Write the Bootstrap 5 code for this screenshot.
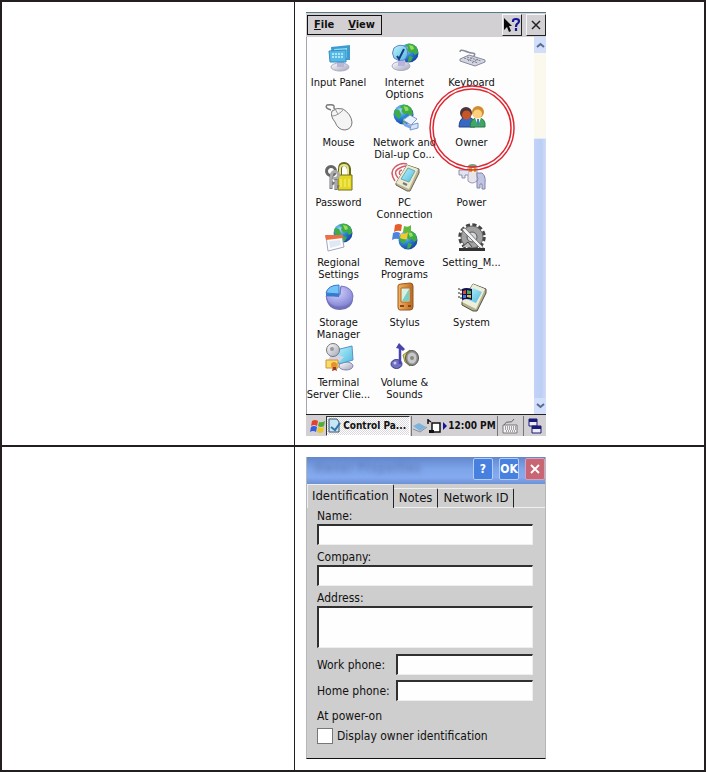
<!DOCTYPE html>
<html lang="en">
<head>
<meta charset="utf-8">
<meta name="viewport" content="width=device-width, initial-scale=1">
<title>Owner settings</title>
<link href="https://cdn.jsdelivr.net/npm/bootstrap@5.3.0/dist/css/bootstrap.min.css" rel="stylesheet">
<style>
body{font-family:"DejaVu Sans Condensed","DejaVu Sans","Liberation Sans",sans-serif;font-size:11px;line-height:12px;color:#111;background:#fff}
button{color:inherit;font:inherit}
.sheet{border:2px solid #231f20}
.step{display:grid;grid-template-columns:293fr 409fr}
.step + .step{border-top:2px solid #231f20}
.step-note{border-right:1px solid #231f20}
.step-shot{padding:10px 11px 9px}
.step + .step .step-shot{padding-bottom:11px}
.device{max-width:240px}
.chrome{background:#d3d0d4}
.chrome button{background:transparent;border:0;padding:0}
.chrome .menus{border:1px solid #111;padding:0 6px;gap:14px;height:20px;margin:1px;font-weight:bold}
.chrome .tool{width:20px;height:22px;border:1px solid #f6f6f6;border-right-color:#222;border-bottom-color:#222}
.menubar{height:25px;border-top:1px solid #59788a}
.applets{display:grid;grid-template-columns:65px 67px 67px;grid-auto-rows:60px;padding:6px 0 11px;box-shadow:inset 1px 0 #a5a5b0;background:#fdfdfe}
.applet{border:0;background:none;padding:0;white-space:nowrap}
.applet svg{width:28px;height:28px;margin-bottom:6px;overflow:visible}
.applet .ring{left:-9px;top:-18px;width:86px;height:86px;margin:0}
.scroller{width:12px;background:#fbf9ee}
.scroller button{border:0;padding:0;height:16px;background:#d2dffa;color:#456}
.thumb{flex:0 0 260px;background:linear-gradient(90deg,#c3d3f8,#bbcef5 60%,#d0dcf6);border-top:1px solid #e2eafb}
.taskbar{height:22px;border-top:1px solid #222;font-weight:bold;font-size:10px;white-space:nowrap}
.chrome .running{height:20px;width:84px;padding:0 1px;gap:2px;border:1px solid #333;border-right-color:#fff;border-bottom-color:#fff;background:repeating-conic-gradient(#fff 0 25%,#dad8dc 0 50%) 0 0/2px 2px}
.tray{gap:1px}
.chrome .edge{border-left:1px solid #777;height:20px}
.dialog{background:#cecece;border-left:1px solid #b7b7b9;border-right:1px solid #b7b7b9;border-bottom:1px solid #111;font-size:12px;line-height:16px}
.titlebar{height:27px;background:linear-gradient(#6387cd,#7da5ea 45%,#85aaf0 75%,#6e91d4);gap:6px;padding:1px 0 4px 7px}
.titlebar h1{font-size:12px;line-height:20px;font-weight:bold;color:transparent;text-shadow:0 0 5px #596ba488}
.titlebar button{width:20px;height:22px;border:1px solid #b3cdf9;border-radius:2px;background:#4880e0;color:#fff;font-weight:bold;padding:0}
.titlebar .shut{background:#c86674;border-color:#d6a2c2}
.tabs{height:24px;font-size:13px}
.tabs button{height:20px;padding:0 5px;border:0;border-top:1px solid #efefef;border-right:1px solid #222;border-bottom:1px solid #efefef;border-radius:0 2px 0 0;background:#cecece}
.tabs .on{height:24px;padding:0 4px 2px;border-bottom:0;border-left:1px solid #efefef}
.tab-rest{border-bottom:1px solid #efefef}
.sheet-form{padding:0 12px 14px 10px}
.sheet-form label{display:block}
.field{width:100%;height:21px;border:1px solid #eee;border-top:2px solid #303030;border-left:2px solid #303030;border-radius:0;background:#fefefe;padding:0 4px;display:block;resize:none}
.field-gap{margin-bottom:4px}
.area{height:42px;margin-bottom:6px}
.phone{margin-bottom:5px}
.phone label{flex:0 0 79px;white-space:nowrap}
.sheet-form legend{float:none;font-size:12px;line-height:16px;padding:2px 0 4px;margin:0}
.tick{appearance:none;width:16px;height:16px;margin:0;border:1px solid #777;background:#fff}
.tick:checked{background:#456}
</style>
<script src="https://cdn.jsdelivr.net/npm/bootstrap@5.3.0/dist/js/bootstrap.bundle.min.js"></script>
</head>
<body>
<svg width="0" height="0" class="position-absolute" aria-hidden="true">
<defs>
<radialGradient id="sea" cx=".35" cy=".3" r=".8"><stop offset="0" stop-color="#9fd8f8"/><stop offset=".45" stop-color="#2f86d8"/><stop offset="1" stop-color="#123a9c"/></radialGradient>
<linearGradient id="steel" x1="0" y1="0" x2="1" y2="1"><stop offset="0" stop-color="#fff"/><stop offset="1" stop-color="#a4a5b8"/></linearGradient>
<linearGradient id="glass" x1="0" y1="0" x2="1" y2="1"><stop offset="0" stop-color="#bdf5fb"/><stop offset="1" stop-color="#4fb8e0"/></linearGradient>
<radialGradient id="pie" cx=".4" cy=".3" r=".8"><stop offset="0" stop-color="#d5d5ff"/><stop offset="1" stop-color="#7878cf"/></radialGradient>
<linearGradient id="bronze"><stop offset="0" stop-color="#f5b565"/><stop offset="1" stop-color="#b86a22"/></linearGradient>
<symbol id="globe" viewBox="0 0 20 20"><circle cx="10" cy="10" r="9.5" fill="url(#sea)"/><path d="M9 1c4-1 7 1 9 4l1 5-3 2-2-3-3 1-3-3 1-3-3-1zM2 5l4 1 2 4-2 4-3-2-2-4zM10 13l4 1-2 4-3 1z" fill="#3fae42"/><path d="M10 2l4 1 1 3-3 1z" fill="#9add63"/></symbol>
</defs></svg>
<main class="sheet">
<section class="step">
<div class="step-note"></div>
<div class="step-shot">
<div class="device">
<header class="menubar chrome d-flex align-items-center">
<nav class="menus d-flex align-items-center me-auto"><button type="button"><u>F</u>ile</button><button type="button"><u>V</u>iew</button></nav>
<button type="button" class="tool d-flex align-items-center justify-content-center me-1" aria-label="Help"><svg width="18" height="18" viewBox="0 0 18 18"><path d="M1 2v12l3-3 2 5 2-1-2-5h3z" fill="#080808"/><path d="M10 6V5q0-2 3-2t3 2q0 2-2 3-1 1-1 3M13 12v3" fill="none" stroke="#15159b" stroke-width="2.2"/></svg></button>
<button type="button" class="tool d-flex align-items-center justify-content-center" aria-label="Close"><svg width="10" height="10" viewBox="0 0 10 10"><path d="M1 1l8 8M9 1L1 9" stroke="#222" stroke-width="1.5"/></svg></button>
</header>
<div class="d-flex">
<div class="applets flex-grow-1">
<button type="button" class="applet d-flex flex-column align-items-center"><svg viewBox="0 0 28 28"><ellipse cx="15" cy="24" rx="9" ry="4" fill="url(#steel)" stroke="#a9a9c4"/><path d="M12 17h7v7h-7z" fill="#b9b5d6"/><path d="M6 4l19-2v15H7z" fill="#3e9bd1"/><path d="M9 6l13-1v10H9z" fill="#8edff4"/><path d="M4 8l17-1v12H5z" fill="#57b7e5" stroke="#368ec0"/><path d="M7 11h11M7 14h11" stroke="#a9e6f8" stroke-width="2" stroke-dasharray="2 1"/></svg><span>Input Panel</span></button>
<button type="button" class="applet d-flex flex-column align-items-center"><svg viewBox="0 0 28 28"><use href="#globe" x="8" y="0" width="20" height="20"/><ellipse cx="10" cy="23" rx="9" ry="4.500" fill="url(#steel)" stroke="#aaaad0"/><path d="M7 17h7v6H7z" fill="#b8b4df"/><path d="M3 5Q9 0 15 4q4 8-2 13-6 2-10-2-3-5 0-10z" fill="url(#glass)" stroke="#6783c7"/><path d="M6 13l2 3 5-10" fill="none" stroke="#173b83" stroke-width="2"/></svg><span>Internet<br>Options</span></button>
<button type="button" class="applet d-flex flex-column align-items-center"><svg viewBox="0 0 28 28"><path d="M2 9q0-3 5-1t7 2q5 0 1 4" fill="none" stroke="#888b99" stroke-width="1.5"/><path d="M2 16l9-4 16 5v2l-10 4L2 18z" fill="#d4d5df" stroke="#85899b"/><path d="M6 15l14 5M9 14l14 4M10 18l5-4M14 20l6-4" stroke="#777d95" stroke-dasharray="2 1"/></svg><span>Keyboard</span></button>

<button type="button" class="applet d-flex flex-column align-items-center"><svg viewBox="0 0 28 28"><path d="M15 7Q8 7 9 4T2 2q-3 3 4 5" fill="none" stroke="#777" stroke-width="1.4"/><path d="M7 8q5-4 11-2 8 5 9 13 0 7-7 8-7 0-10-8-5-6-3-11z" fill="#f4f4f5" stroke="#77777b"/><path d="M7 13q6 0 12-7M13 11l-3-5" fill="none" stroke="#999"/></svg><span>Mouse</span></button>
<button type="button" class="applet d-flex flex-column align-items-center"><svg viewBox="0 0 28 28"><use href="#globe" x="2" y="1" width="21" height="21"/><path d="M12 17l7-5 7 4-6 6z" fill="#e9f2ff" stroke="#7f9cd0"/><path d="M12 19l7 3 1 4-7-3z" fill="#80a7e7"/><path d="M20 22l7-2v5l-8 2z" fill="#d6e4fa" stroke="#7999c8"/></svg><span>Network and<br>Dial-up Co...</span></button>
<button type="button" class="applet d-flex flex-column align-items-center position-relative"><svg viewBox="0 0 28 28"><path d="M1 24q0-10 8-10t8 10z" fill="#3668c6" stroke="#244787"/><circle cx="8" cy="10" r="6" fill="#4b3538"/><circle cx="8.500" cy="12" r="4.500" fill="#c85528"/><path d="M12 24q0-9 8-9t7 9z" fill="#3fa761" stroke="#28784c"/><path d="M17 15l3 7 3-7z" fill="#fff"/><circle cx="20" cy="9" r="6" fill="#d08c2f"/><circle cx="19.500" cy="11" r="4.500" fill="#ffd17c"/><path d="M20 16v6" stroke="#477fc4" stroke-width="2"/></svg><span>Owner</span><svg class="ring position-absolute" viewBox="0 0 86 86"><circle cx="43" cy="43" r="42" fill="none" stroke="#df2731" stroke-width="1.500"/><circle cx="43" cy="43" r="39" fill="none" stroke="#df2731" stroke-width="1.500"/></svg></button>

<button type="button" class="applet d-flex flex-column align-items-center"><svg viewBox="0 0 28 28"><path d="M15 14V6q0-5 4-5t5 5v8" fill="none" stroke="#67671d" stroke-width="4"/><path d="M15 14V6q0-4 4-4t4 4v8" fill="none" stroke="#e7e28c" stroke-width="2"/><path d="M13 12h14v15H13z" fill="#e2d627" stroke="#75701b"/><path d="M16 16v8M20 16v8M24 16v8" stroke="#fff37a"/><circle cx="6" cy="8" r="4.500" fill="none" stroke="#666" stroke-width="3"/><circle cx="10" cy="12" r="3.500" fill="none" stroke="#aaa" stroke-width="3"/><path d="M6 13v13M6 19l3 2M11 16v11M11 23l3 1" stroke="#77777d" stroke-width="3"/><path d="M6 13v12M11 17v9" stroke="#ddd"/></svg><span>Password</span></button>
<button type="button" class="applet d-flex flex-column align-items-center"><svg viewBox="0 0 28 28"><path d="M4 18Q-2 9 4 4T16 1M7 15Q2 9 7 6t8-3M9 12q-2-4 2-5" fill="none" stroke="#d45b66" stroke-width="1.500"/><path d="M16 2l12 4v4L19 28h-3L5 22v-2z" fill="#bcb596" stroke="#68644e"/><path d="M16 2l11 4-9 20L5 20z" fill="#eee9cf"/><path d="M17 5l7 3-6 11-8-3z" fill="url(#glass)" stroke="#64aaa9"/><path d="M12 20l4 2" stroke="#777" stroke-width="2"/></svg><span>PC<br>Connection</span></button>
<button type="button" class="applet d-flex flex-column align-items-center"><svg viewBox="0 0 28 28"><path d="M10 3h9v15q-5 4-9 0z" fill="#e7e4ee" stroke="#999ab0"/><path d="M11 4h7v5h-7z" fill="#df9d35"/><path d="M14 3h2v7h-2z" fill="#fff1a0"/><ellipse cx="14.500" cy="3" rx="4" ry="2" fill="#7ba07b"/><path d="M10 7H1v5h3v3h3v-3h3" fill="#e3e3f0" stroke="#8d8eac"/><path d="M19 10h5q4 3 3 10v6h-3v-5h-2v4h-3v-7q2-2 0-5z" fill="#c2c5e2" stroke="#8285ab"/></svg><span>Power</span></button>

<button type="button" class="applet d-flex flex-column align-items-center"><svg viewBox="0 0 28 28"><use href="#globe" x="8" y="0" width="20" height="20"/><path d="M1 13h16l2 11-16 4z" fill="#fff" stroke="#a1a6bc"/><path d="M0 12h18v3L1 17z" fill="#ed7045"/><path d="M4 18l11-1 1 5-11 3z" fill="#e0e8f5"/></svg><span>Regional<br>Settings</span></button>
<button type="button" class="applet d-flex flex-column align-items-center"><svg viewBox="0 0 28 28"><use href="#globe" x="7" y="7" width="20" height="20"/><path d="M4 2q4-2 7 0l-1 6q-4-1-7 1z" fill="#e55f2c"/><path d="M13 3q4 2 7-1v7q-4 2-8 0z" fill="#64b83c"/><path d="M2 10q4-2 7 0l-1 6q-4-1-7 1z" fill="#4d82df"/><path d="M10 10q4 2 7-1l-1 7q-3 1-7-1z" fill="#f4c735"/></svg><span>Remove<br>Programs</span></button>
<button type="button" class="applet d-flex flex-column align-items-center"><svg viewBox="0 0 28 28"><circle cx="14" cy="14" r="12" fill="none" stroke="#444" stroke-width="3.500" stroke-dasharray="4 2.280"/><circle cx="14" cy="14" r="11" fill="#a2a2a2" stroke="#666"/><circle cx="14" cy="14" r="5" fill="#d5dae0" stroke="#555"/><path d="M4 6l3-1 17 18 2 3-4-1L6 9z" fill="#f4f4f4" stroke="#777"/><path d="M1 25h26v3H1z" fill="#333"/><path d="M4 24l6-5 4 5" fill="#bbb" stroke="#444"/></svg><span>Setting_M...</span></button>

<button type="button" class="applet d-flex flex-column align-items-center"><svg viewBox="0 0 28 28"><path d="M14 15l1-11q12 0 13 11 0 11-13 12Q3 27 1 15z" fill="#7171b8"/><path d="M15 12l1-9q11 1 12 10 0 10-13 11Q3 24 1 13z" fill="url(#pie)" stroke="#7777c2"/><path d="M14 11V2Q3 2 1 10z" fill="#74c4fa" stroke="#3478cb"/><path d="M1 10l13 1v3L1 13z" fill="#347bce"/></svg><span>Storage<br>Manager</span></button>
<button type="button" class="applet d-flex flex-column align-items-center"><svg viewBox="0 0 28 28"><path d="M7 3q0-2 3-2l9-1q3 0 3 3v21q0 3-3 3H9q-2 0-2-3z" fill="url(#bronze)" stroke="#98571f"/><path d="M10 5h9v14h-9z" fill="#d7f2e2" stroke="#b36a2a"/><path d="M18 6v12h-7z" fill="#79cfc2"/><path d="M9 23h4M17 23h3" stroke="#8b4414" stroke-width="2"/></svg><span>Stylus</span></button>
<button type="button" class="applet d-flex flex-column align-items-center"><svg viewBox="0 0 28 28"><path d="M15 1l13 5v4L19 28h-4L4 22v-3z" fill="#b3b18b" stroke="#4f4f41"/><path d="M15 1l12 5-9 20L4 19z" fill="#eeefda"/><path d="M15 5l9 4-6 11-10-4z" fill="url(#glass)"/><path d="M4 6q4-2 10 0v11q-5-2-10 0z" fill="#10104f"/><path d="M5 8l3-1v4H5z" fill="#d4503f"/><path d="M9 7l4 1v3H9z" fill="#4caa54"/><path d="M5 12h3v3H5z" fill="#457ed5"/><path d="M9 12h4v3l-4-1z" fill="#d8c33a"/><path d="M1 5v12M3 6v11" stroke="#222" stroke-dasharray="2 2"/></svg><span>System</span></button>

<button type="button" class="applet d-flex flex-column align-items-center"><svg viewBox="0 0 28 28"><ellipse cx="21" cy="23" rx="7" ry="4" fill="url(#steel)" stroke="#7f86b2"/><path d="M11 7l16-4 1 14-14 4z" fill="url(#glass)" stroke="#5792c4"/><path d="M7 10l12 4-5 5-11-2z" fill="#d5d4e5"/><circle cx="8" cy="7" r="6.500" fill="url(#steel)" stroke="#777"/><circle cx="7" cy="6" r="2" fill="#999"/><path d="M1 17h12v8H1z" fill="#fadb68" stroke="#c9963c"/><circle cx="9" cy="22" r="3" fill="#e8902c"/><path d="M8 24l-1 4 3-1 2 1-1-4z" fill="#943e22"/></svg><span>Terminal<br>Server Clie...</span></button>
<button type="button" class="applet d-flex flex-column align-items-center"><svg viewBox="0 0 28 28"><path d="M12 12l7-5v16l-5-4z" fill="#ddd444" stroke="#8d8a48"/><ellipse cx="21" cy="15" rx="6.500" ry="7.500" fill="#8e8e8e" stroke="#555"/><ellipse cx="21" cy="15" rx="4.500" ry="5.500" fill="#c9c9c9"/><circle cx="21" cy="15" r="2" fill="#888"/><ellipse cx="5.500" cy="21" rx="5.500" ry="4.500" fill="#706fc0" stroke="#3b3a8a"/><path d="M9 21V3" stroke="#4745ad" stroke-width="2.500"/><path d="M5 5l3-5 6 6-2 2-3-2z" fill="#4745ad"/><circle cx="4" cy="20" r="1.500" fill="#c6c5f3"/></svg><span>Volume &amp;<br>Sounds</span></button>
</div>
<div class="scroller d-flex flex-column justify-content-between">
<button type="button" aria-label="Scroll up"><svg class="d-block mx-auto" width="9" height="6" viewBox="0 0 9 6"><path d="M1 5l3.500-3L8 5" fill="none" stroke="#5a6b95" stroke-width="2"/></svg></button>
<div class="mt-auto thumb"></div>
<button type="button" aria-label="Scroll down"><svg class="d-block mx-auto" width="9" height="6" viewBox="0 0 9 6"><path d="M1 1l3.500 3L8 1" fill="none" stroke="#5a6b95" stroke-width="2"/></svg></button>
</div>
</div>
<footer class="taskbar chrome d-flex align-items-center justify-content-between">
<button type="button" aria-label="Start" class="ms-1"><svg class="d-block" width="15" height="16" viewBox="0 0 15 16"><path d="M2 3q3-2 6 0L7 8Q4 6 1 8z" fill="#e3422e"/><path d="M9 4q3 1 6-1l-1 5q-3 2-6 0z" fill="#52ae35"/><path d="M1 9q3-2 6 0l-1 5q-3-2-6 0z" fill="#385ce0"/><path d="M8 9q3 2 6 0l-1 5q-3 2-6 0z" fill="#efc51f"/></svg></button>
<button type="button" class="running d-flex align-items-center"><svg class="flex-shrink-0" width="13" height="15" viewBox="0 0 13 15"><path d="M1 1h8l2 3v10H1z" fill="#c8e5f5" stroke="#39566c"/><path d="M3 9l4 3 5-7" fill="none" stroke="#3475a5" stroke-width="2"/></svg><span>Control Pa...</span></button>
<div class="tray edge d-flex align-items-center"><svg width="29" height="16" viewBox="0 0 29 16"><path d="M1 8l7 5 6-4-7-4z" fill="#7db4dc"/><path d="M1 11l7 3 7-5" fill="none" stroke="#8790a3"/><path d="M16 1v5M16 2l3 2" stroke="#111" stroke-width="1.500"/><path d="M20 5h8v9h-8z" fill="#fff" stroke="#111" stroke-width="1.500"/><path d="M17 12h5v3h-5z" fill="#111"/></svg><svg width="5" height="8" viewBox="0 0 5 8"><path d="M1 0l4 4-4 4z" fill="#15159b"/></svg><span>12:00 PM</span></div>
<button type="button" aria-label="Keyboard" class="edge"><svg class="d-block mx-1" width="16" height="16" viewBox="0 0 16 16"><path d="M2 7q2-4 5-3t5-3" fill="none" stroke="#666"/><path d="M1 7h14v8H1z" fill="#f4f4f4" stroke="#777"/><path d="M3 9h11M3 11h11M4 13h9" stroke="#555" stroke-dasharray="1 1"/></svg></button>
<button type="button" aria-label="Windows" class="edge"><svg class="d-block mx-1" width="14" height="16" viewBox="0 0 14 16"><path d="M1 1h8v7H1zM4 8h9v7H4z" fill="#ececf8" stroke="#1b1b79"/><path d="M1 1h8v3H1zM4 8h9v3H4z" fill="#1b1b79"/></svg></button>
</footer>
</div>
</div>
</section>
<section class="step">
<div class="step-note"></div>
<div class="step-shot">
<div class="device dialog">
<header class="titlebar d-flex"><h1 class="m-0 me-auto text-nowrap">Owner Properties</h1><button type="button">?</button><button type="button">OK</button><button type="button" class="shut d-flex align-items-center justify-content-center" aria-label="Close"><svg width="10" height="10" viewBox="0 0 10 10"><path d="M1 1l8 8M9 1L1 9" stroke="#fff" stroke-width="1.800"/></svg></button></header>
<div class="tabs d-flex align-items-end text-nowrap" role="tablist"><button type="button" class="on" role="tab" aria-selected="true">Identification</button><button type="button" role="tab" aria-selected="false">Notes</button><button type="button" role="tab" aria-selected="false">Network ID</button><span class="tab-rest flex-grow-1"></span></div>
<form class="sheet-form">
<label for="name">Name:</label><input id="name" type="text" class="field field-gap">
<label for="company">Company:</label><input id="company" type="text" class="field field-gap">
<label for="address">Address:</label><textarea id="address" class="field area"></textarea>
<div class="phone d-flex align-items-center"><label for="work">Work phone:</label><input id="work" type="tel" class="field"></div>
<div class="phone d-flex align-items-center"><label for="home">Home phone:</label><input id="home" type="tel" class="field"></div>
<fieldset><legend>At power-on</legend>
<div class="d-flex align-items-center gap-1"><input id="show" type="checkbox" class="tick"><label for="show">Display owner identification</label></div></fieldset>
</form>
</div>
</div>
</section>
</main>
</body>
</html>
